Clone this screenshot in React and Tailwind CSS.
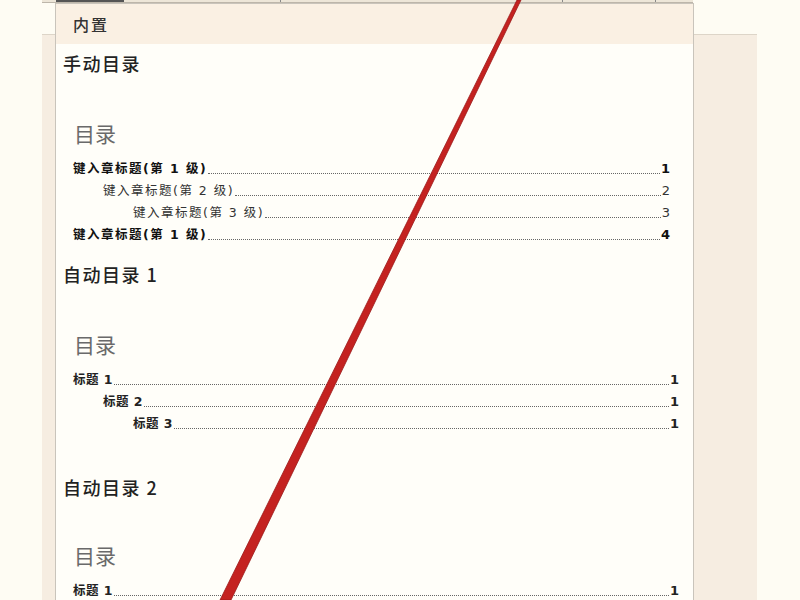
import React from "react";

const cjk = { fontFamily: '"Noto Sans CJK SC", "Noto Sans", sans-serif' };
const rowFont = { fontFamily: '"DejaVu Sans", "Noto Sans CJK SC", sans-serif' };

function Row({ text, num, indent, bold, mr }) {
  return (
    <div className={`flex items-end h-[22px] ${indent} ${mr}`} style={rowFont}>
      <span
        className={`text-[12.5px] leading-[22px] whitespace-nowrap ${bold ? "font-bold text-[#111]" : "text-[#333]"} tracking-[1.5px]`}
      >
        {text}
      </span>
      <span className="flex-1 border-b border-dotted border-[#666] mb-[6px] mx-[1px]" />
      <span className={`text-[13px] leading-[22px] ${bold ? "font-bold text-[#111]" : "text-[#333]"}`}>{num}</span>
    </div>
  );
}

function Row2({ text, num, indent }) {
  return (
    <div className={`flex items-end h-[22px] ${indent} mr-[14px]`} style={rowFont}>
      <span className="text-[12.5px] leading-[22px] whitespace-nowrap font-bold text-[#222] tracking-[0.5px]">{text}</span>
      <span className="flex-1 border-b border-dotted border-[#666] mb-[6px] mx-[1px]" />
      <span className="text-[13px] leading-[22px] font-bold text-[#222]">{num}</span>
    </div>
  );
}

export default function App() {
  return (
    <div className="relative w-[800px] h-[600px] overflow-hidden bg-[#fefcf3]" style={cjk}>
      {/* top strip */}
      <div className="flex h-[3px] ml-[42px] w-[651px] bg-[#ede6d8] border-b border-[#bdb6aa]">
        <div className="w-[14px]" />
        <div className="w-[68px] bg-[#555]" />
        <div className="w-[157px] border-r border-[#888]" />
        <div className="w-[282px] border-r border-[#888]" />
        <div className="w-[93px] border-r border-[#888]" />
      </div>
      {/* document behind */}
      <div className="flex mt-[31px] h-[566px]">
        <div className="w-[42px]" />
        <div className="w-[715px] bg-[#f6ede1] border-t border-[#ddd5c8]" />
      </div>

      {/* dropdown panel */}
      <div className="absolute left-[55px] top-[3px] w-[639px] h-[600px] bg-[#fffef9] border border-[#c9c4bb] flex flex-col">
        <div className="h-[40px] bg-[#faf0e3] flex items-center pl-[17px]">
          <span className="text-[16px] tracking-[2px] text-[#333] font-medium">内置</span>
        </div>
        <div className="flex flex-col pl-[7px]">
          <div className="mt-[7px] text-[18px] leading-[24px] tracking-[1.5px] text-[#222] font-medium">手动目录</div>
          <div className="mt-[44px] ml-[11px] text-[21px] leading-[28px] text-[#6a6a6a]">目录</div>
          <div className="mt-[11px] ml-[10px] flex flex-col">
            <Row text="键入章标题(第 1 级)" num="1" indent="" bold mr="mr-[23px]" />
            <Row text="键入章标题(第 2 级)" num="2" indent="pl-[30px]" mr="mr-[23px]" />
            <Row text="键入章标题(第 3 级)" num="3" indent="pl-[60px]" mr="mr-[23px]" />
            <Row text="键入章标题(第 1 级)" num="4" indent="" bold mr="mr-[23px]" />
          </div>
          <div className="mt-[16px] text-[18px] leading-[24px] tracking-[1.5px] text-[#222] font-medium">自动目录 1</div>
          <div className="mt-[44px] ml-[11px] text-[21px] leading-[28px] text-[#6a6a6a]">目录</div>
          <div className="mt-[11px] ml-[10px] flex flex-col">
            <Row2 text="标题 1" num="1" indent="" />
            <Row2 text="标题 2" num="1" indent="pl-[30px]" />
            <Row2 text="标题 3" num="1" indent="pl-[60px]" />
          </div>
          <div className="mt-[40px] text-[18px] leading-[24px] tracking-[1.5px] text-[#222] font-medium">自动目录 2</div>
          <div className="mt-[42px] ml-[11px] text-[21px] leading-[28px] text-[#6a6a6a]">目录</div>
          <div className="mt-[11px] ml-[10px] flex flex-col">
            <Row2 text="标题 1" num="1" indent="" />
          </div>
        </div>
      </div>

      {/* red annotation stroke */}
      <svg className="absolute left-0 top-0 pointer-events-none" width="800" height="600" viewBox="0 0 800 600">
        <polygon points="517,0 521,0 231,600 220,600" fill="#c42220" stroke="#9a1a1a" strokeWidth="0.8" />
      </svg>
    </div>
  );
}
